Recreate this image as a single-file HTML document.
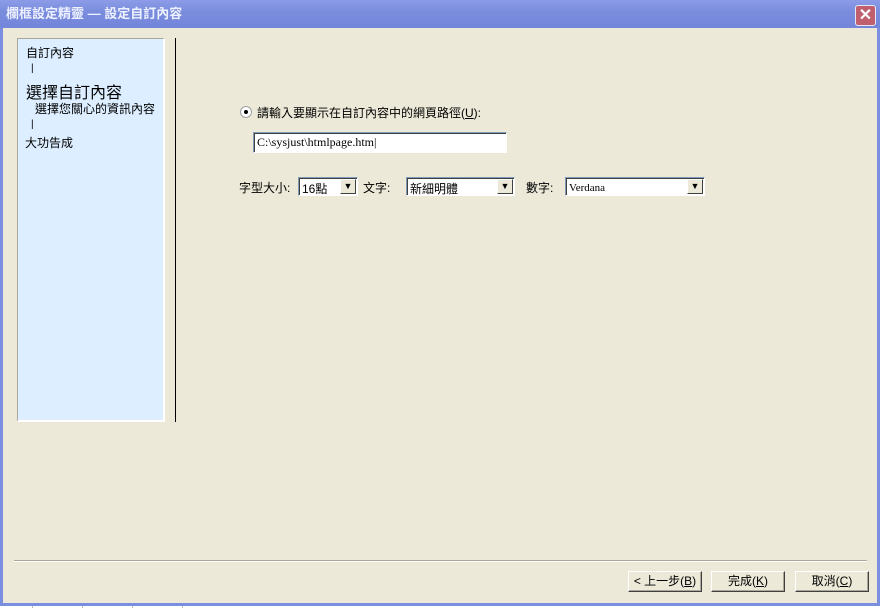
<!DOCTYPE html>
<html><head><meta charset="utf-8"><style>
*{margin:0;padding:0;box-sizing:border-box}
body{width:880px;height:608px;position:relative;background:#fff;font-family:"Liberation Sans","Noto Sans CJK TC",sans-serif;font-size:12px;color:#000;overflow:hidden}
.win{position:absolute;left:0;top:0;width:880px;height:606px;background:#7b8ee0;}
.title{position:absolute;left:0;top:0;width:880px;height:28px;background:linear-gradient(#8c9ce8,#7a8ddd 40%,#7385da);color:#eef1ff;font-weight:bold;font-size:13px;line-height:28px;padding-left:6px}
.close{position:absolute;right:4px;top:5px;width:21px;height:21px;background:#c0606e;border:1px solid #e8e8f4;border-radius:3px;color:#fff;text-align:center;line-height:19px;font-size:16px;font-weight:bold}
.client{position:absolute;left:3px;top:28px;width:874px;height:575px;background:#ECE9D8}
.a{position:absolute;white-space:nowrap}
.panel{position:absolute;left:14px;top:10px;width:148px;height:384px;background:#DCEEFF;border-top:1px solid #aca899;border-left:1px solid #aca899;border-right:2px solid #fff;border-bottom:2px solid #fff}
.inp{position:absolute;background:#fff;border-top:1px solid #7f9db9;border-left:1px solid #7f9db9;border-right:1px solid #fff;border-bottom:1px solid #fff;box-shadow:inset 1px 1px 0 #404040}
.sel{position:absolute;background:#fff;border:1px solid #7f9db9;border-right-color:#fff;border-bottom-color:#fff;box-shadow:inset 1px 1px 0 #404040;font-size:12px;padding:2px 3px}
.sel .b{position:absolute;right:1px;top:1px;width:16px;height:15px;background:#ECE9D8;border:1px solid #fff;border-right-color:#404040;border-bottom-color:#404040;font-size:9px;text-align:center;line-height:13px}
.btn{position:absolute;top:543px;width:74px;height:21px;background:#ECE9D8;border:1px solid #fff;border-right-color:#404040;border-bottom-color:#404040;box-shadow:inset -1px -1px 0 #aca899;text-align:center;line-height:19px;font-size:12px}
</style></head><body>
<div class="win">
<div class="title">欄框設定精靈 — 設定自訂內容</div>
<div class="close">✕</div>
<div class="client">
 <div class="panel">
  <div class="a" style="left:8px;top:5px">自訂內容</div>
  <div class="a" style="left:13px;top:24px;font-size:10px">|</div>
  <div class="a" style="left:8px;top:40px;font-size:16px">選擇自訂內容</div>
  <div class="a" style="left:17px;top:61px">選擇您關心的資訊內容</div>
  <div class="a" style="left:13px;top:80px;font-size:10px">|</div>
  <div class="a" style="left:7px;top:95px">大功告成</div>
 </div>
 <div class="a" style="left:172px;top:10px;width:1px;height:384px;background:#000"></div>
 <div class="a" style="left:237px;top:78px;width:12px;height:12px;border-radius:50%;background:#fff;border:1px solid #a0a0a0"></div>
 <div class="a" style="left:241px;top:82px;width:4px;height:4px;border-radius:50%;background:#000"></div>
 <div class="a" style="left:254px;top:76px">請輸入要顯示在自訂內容中的網頁路徑(<u>U</u>):</div>
 <div class="inp" style="left:250px;top:104px;width:254px;height:21px"><span class="a" style="left:3px;top:2px;font-family:'Liberation Serif',serif;font-size:12px">C:\sysjust\htmlpage.htm|</span></div>
 <div class="a" style="left:236px;top:151px">字型大小:</div>
 <div class="sel" style="left:295px;top:149px;width:60px;height:19px"><span>16點</span><div class="b">▼</div></div>
 <div class="a" style="left:360px;top:151px">文字:</div>
 <div class="sel" style="left:403px;top:149px;width:109px;height:19px"><span>新細明體</span><div class="b">▼</div></div>
 <div class="a" style="left:523px;top:151px">數字:</div>
 <div class="sel" style="left:562px;top:149px;width:140px;height:19px"><span style="font-family:'Liberation Serif',serif;font-size:11px">Verdana</span><div class="b">▼</div></div>
 <div class="a" style="left:11px;top:532px;width:853px;height:1px;background:#aca899"></div>
 <div class="a" style="left:11px;top:533px;width:853px;height:1px;background:#fff"></div>
 <div class="btn" style="left:625px">&lt; 上一步(<u>B</u>)</div>
 <div class="btn" style="left:708px">完成(<u>K</u>)</div>
 <div class="btn" style="left:792px">取消(<u>C</u>)</div>
</div>
</div>
<div class="a" style="left:32px;top:606px;width:1px;height:2px;background:#bbb"></div>
<div class="a" style="left:82px;top:606px;width:1px;height:2px;background:#bbb"></div>
<div class="a" style="left:132px;top:606px;width:1px;height:2px;background:#bbb"></div>
<div class="a" style="left:182px;top:606px;width:1px;height:2px;background:#bbb"></div>
</body></html>
